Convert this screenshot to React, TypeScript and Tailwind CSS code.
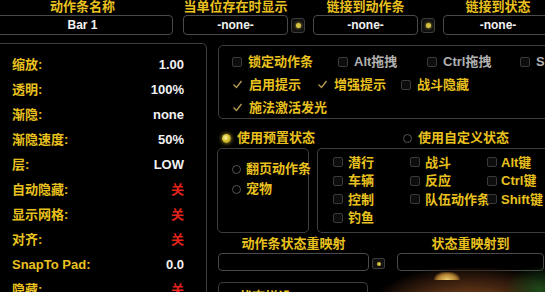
import React from "react";

const font = { fontFamily: '"Liberation Sans", "Noto Sans CJK SC", sans-serif' };

function Check({ checked, dim }: { checked?: boolean; dim?: boolean }) {
  if (checked) {
    return (
      <svg width="11" height="11" viewBox="0 0 11 11" className="shrink-0">
        <polyline points="1.5,5.5 4.5,8.5 9.5,2" fill="none" stroke="#b59a52" strokeWidth="1.4" />
      </svg>
    );
  }
  return (
    <span
      className={
        "block w-[10px] h-[10px] shrink-0 rounded-[2px] border " +
        (dim ? "border-[#2e2e2e] bg-[#0b0b0b]" : "border-[#3a3a3a] bg-[#0d0d0d]")
      }
    />
  );
}

function Radio({ on }: { on?: boolean }) {
  if (on) {
    return (
      <span className="block w-[9px] h-[9px] shrink-0 rounded-full bg-[radial-gradient(circle_at_40%_40%,#fff6a0_0%,#d9c230_45%,#7a6a10_100%)] shadow-[0_0_4px_#c9b030]" />
    );
  }
  return <span className="block w-[9px] h-[9px] shrink-0 rounded-full border-[1.5px] border-[#555]" />;
}

function TopField({ label, value, w }: { label: string; value: string; w: string }) {
  return (
    <div className={"flex flex-col items-center shrink-0 " + w}>
      <div className="h-[15px] leading-[14px] text-[13px] font-bold text-[#e9c11e]">{label}</div>
      <div className="w-full h-[20px] rounded-[4px] border-[1.5px] border-[#4a4a4a] flex items-center justify-center text-[12px] font-bold text-[#f2f2f2]">
        {value}
      </div>
    </div>
  );
}

function SmallBtn() {
  return (
    <div className="mt-[18px] w-[14px] h-[15px] shrink-0 rounded-[3px] border border-[#3c3c3c] bg-[#111] flex items-center justify-center">
      <span className="block w-[5px] h-[5px] rounded-full bg-[#d6c040] shadow-[0_0_3px_#e0c840]" />
    </div>
  );
}

const rows: [string, string, string][] = [
  ["缩放:", "1.00", "w"],
  ["透明:", "100%", "w"],
  ["渐隐:", "none", "w"],
  ["渐隐速度:", "50%", "w"],
  ["层:", "LOW", "w"],
  ["自动隐藏:", "关", "r"],
  ["显示网格:", "关", "r"],
  ["对齐:", "关", "r"],
  ["SnapTo Pad:", "0.0", "w"],
  ["隐藏:", "关", "r"],
];

function Item({ checked, text, w, dim }: { checked?: boolean; text: string; w: string; dim?: boolean }) {
  return (
    <div className={"flex items-center gap-[6px] shrink-0 " + w}>
      <Check checked={checked} />
      <span className={"text-[13px] font-bold whitespace-nowrap " + (dim ? "text-[#b0b0b0]" : "text-[#e9c11e]")}>
        {text}
      </span>
    </div>
  );
}

export default function App() {
  return (
    <div className="w-[545px] h-[292px] bg-black overflow-hidden relative" style={font}>
      {/* top fields */}
      <div className="flex items-start ml-[-8px] h-[43px]">
        <TopField label="动作条名称" value="Bar 1" w="w-[181px]" />
        <div className="w-[10px] shrink-0" />
        <TopField label="当单位存在时显示" value="-none-" w="w-[105px]" />
        <div className="w-[3px] shrink-0" />
        <SmallBtn />
        <div className="w-[8px] shrink-0" />
        <TopField label="链接到动作条" value="-none-" w="w-[105px]" />
        <div className="w-[3px] shrink-0" />
        <SmallBtn />
        <div className="w-[8px] shrink-0" />
        <TopField label="链接到状态" value="-none-" w="w-[110px]" />
      </div>

      <div className="flex items-start">
        {/* left settings panel */}
        <div className="ml-[-5px] w-[212px] h-[260px] shrink-0 rounded-[5px] border-[1.5px] border-[#3e3e3e] pt-[8px] pl-[16px] pr-[22px]">
          {rows.map(([k, v, c]) => (
            <div key={k} className="h-[25px] flex items-center justify-between text-[13px] font-bold">
              <span className="text-[#e9c11e]">{k}</span>
              <span className={c === "r" ? "text-[#e3221c]" : "text-[#f2f2f2]"}>{v}</span>
            </div>
          ))}
        </div>

        {/* right side */}
        <div className="ml-[11px] flex flex-col w-[340px] shrink-0">
          <div className="mt-[2px] h-[74px] rounded-[5px] border-[1.5px] border-[#3e3e3e] pt-[4px] pl-[13px]">
            <div className="h-[23px] flex items-center">
              <Item text="锁定动作条" w="w-[106px]" />
              <Item text="Alt拖拽" w="w-[89px]" dim />
              <Item text="Ctrl拖拽" w="w-[93px]" dim />
              <Item text="ShowGrid" w="w-[80px]" dim />
            </div>
            <div className="h-[23px] flex items-center">
              <Item checked text="启用提示" w="w-[85px]" />
              <Item checked text="增强提示" w="w-[84px]" />
              <Item text="战斗隐藏" w="w-[90px]" />
            </div>
            <div className="h-[23px] flex items-center">
              <Item checked text="施法激活发光" w="w-[120px]" />
            </div>
          </div>

          <div className="h-[29px] pt-[9px] flex items-center text-[13px] font-bold text-[#e9c11e]">
            <div className="w-[185px] pl-[4px] flex items-center gap-[6px]">
              <Radio on />
              <span>使用预置状态</span>
            </div>
            <div className="flex items-center gap-[6px]">
              <Radio />
              <span>使用自定义状态</span>
            </div>
          </div>

          <div className="flex h-[85px] gap-[8px] ml-[-1px]">
            <div className="w-[92px] shrink-0 rounded-[5px] border-[1.5px] border-[#3e3e3e] pt-[10px] pl-[14px] text-[13px] font-bold text-[#e9c11e]">
              <div className="h-[20px] flex items-center gap-[5px]">
                <Radio />
                <span className="whitespace-nowrap">翻页动作条</span>
              </div>
              <div className="h-[20px] flex items-center gap-[5px]">
                <Radio />
                <span>宠物</span>
              </div>
            </div>
            <div className="flex-1 rounded-l-[5px] border-[1.5px] border-r-0 border-[#3e3e3e] pt-[4px] pl-[15px] flex">
              <div className="w-[77px] flex flex-col">
                {["潜行", "车辆", "控制", "钓鱼"].map((t) => (
                  <div key={t} className="h-[18.5px] flex items-center gap-[5px]">
                    <Check />
                    <span className="text-[13px] font-bold text-[#e9c11e]">{t}</span>
                  </div>
                ))}
              </div>
              <div className="w-[77px] flex flex-col">
                {["战斗", "反应", "队伍动作条"].map((t) => (
                  <div key={t} className="h-[18.5px] flex items-center gap-[5px]">
                    <Check />
                    <span className="text-[13px] font-bold text-[#e9c11e] whitespace-nowrap">{t}</span>
                  </div>
                ))}
              </div>
              <div className="flex flex-col">
                {["Alt键", "Ctrl键", "Shift键"].map((t) => (
                  <div key={t} className="h-[18.5px] flex items-center gap-[4px]">
                    <Check />
                    <span className="text-[13px] font-bold text-[#e9c11e] whitespace-nowrap">{t}</span>
                  </div>
                ))}
              </div>
            </div>
          </div>

          <div className="flex items-start mt-[1px]">
            <div className="w-[151px] shrink-0 flex flex-col items-center">
              <div className="h-[19px] flex items-center text-[13px] font-bold text-[#e9c11e]">动作条状态重映射</div>
              <div className="w-full h-[18px] rounded-[4px] border-[1.5px] border-[#4a4a4a]" />
            </div>
            <div className="ml-[3px] mt-[24px] w-[13px] h-[11px] shrink-0 rounded-[2px] border border-[#3c3c3c] bg-[#111] flex items-center justify-center">
              <span className="block w-[4px] h-[4px] rounded-full bg-[#d6c040]" />
            </div>
            <div className="ml-[12px] w-[147px] shrink-0 flex flex-col items-center">
              <div className="h-[19px] flex items-center text-[13px] font-bold text-[#e9c11e]">状态重映射到</div>
              <div className="w-full h-[18px] rounded-[4px] border-[1.5px] border-[#4a4a4a]" />
            </div>
          </div>

          <div className="mt-[11px] w-[150px] h-[20px] rounded-t-[5px] border-[1.5px] border-b-0 border-[#3e3e3e] pl-[20px] pt-[4px] text-[13px] font-bold text-[#e9c11e]">
            状态栏设
          </div>
        </div>
      </div>

      {/* glow overlay at bottom right */}
      <div className="absolute left-[370px] top-[268px] w-[200px] h-[80px] rounded-full bg-[radial-gradient(ellipse_at_50%_60%,#8a5226_0%,#5e3416_35%,#26140a_60%,transparent_75%)]" />
      <div className="absolute left-[505px] top-[265px] w-[70px] h-[50px] rounded-full bg-[radial-gradient(ellipse_at_center,#1f4a1a_0%,transparent_70%)]" />
      <div className="absolute left-[434px] top-[272px] w-[26px] h-[8px] rounded-t-full bg-[radial-gradient(ellipse_at_50%_100%,#f0d070_0%,#b08030_50%,transparent_80%)]" />
    </div>
  );
}
